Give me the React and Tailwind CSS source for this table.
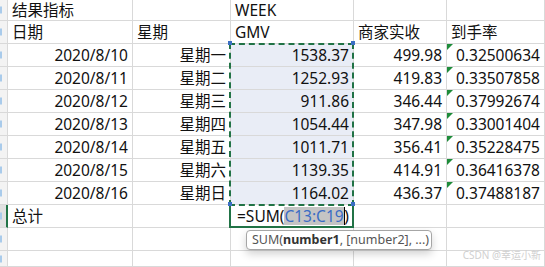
import React from 'react';

const rows = [
  ['2020/8/10', '星期一', '1538.37', '499.98', '0.32500634'],
  ['2020/8/11', '星期二', '1252.93', '419.83', '0.33507858'],
  ['2020/8/12', '星期三', '911.86', '346.44', '0.37992674'],
  ['2020/8/13', '星期四', '1054.44', '347.98', '0.33001404'],
  ['2020/8/14', '星期五', '1011.71', '356.41', '0.35228475'],
  ['2020/8/15', '星期六', '1139.35', '414.91', '0.36416378'],
  ['2020/8/16', '星期日', '1164.02', '436.37', '0.37488187'],
];

const cell = 'relative flex items-center border-r border-b border-[#d9d9d9] px-[4px] leading-[18px] whitespace-nowrap overflow-hidden';

const RowHead = ({ active }) => (
  <div className={`relative border-b border-[#d9d9d9] ${active ? 'bg-[#e1e1e1] border-r-2 border-r-[#217346]' : 'bg-[#f3f3f3] border-r border-r-[#d9d9d9]'}`}>
    <span className="absolute left-0 top-1/2 -translate-y-1/2 w-[2px] h-[7px] bg-[#a9cbeb]" />
  </div>
);

const Flag = () => (
  <span className="absolute left-0 top-0 w-0 h-0 border-t-[6px] border-t-[#1e8c3a] border-r-[6px] border-r-transparent" />
);

export default function App() {
  return (
    <div className="relative w-[545px] h-[267px] overflow-hidden bg-white text-[15.5px] text-[#111]" style={{ fontFamily: '"Noto Sans", "Noto Sans CJK SC", sans-serif' }}>
      <div className="grid grid-cols-[8px_125px_98px_123px_93px_98px] grid-rows-[21px_repeat(10,23px)_16px]">
        <RowHead />
        <div className={cell}>结果指标</div>
        <div className={cell}></div>
        <div className={cell}>WEEK</div>
        <div className={cell}></div>
        <div className={cell}></div>

        <RowHead />
        <div className={cell}>日期</div>
        <div className={cell}>星期</div>
        <div className={cell}>GMV</div>
        <div className={cell}>商家实收</div>
        <div className={cell}>到手率</div>

        {rows.map((r) => (
          <React.Fragment key={r[0]}>
            <RowHead />
            <div className={`${cell} justify-end`}>{r[0]}</div>
            <div className={`${cell} justify-end`}>{r[1]}</div>
            <div className={`${cell} justify-end bg-[#e9edf6]`}>{r[2]}</div>
            <div className={`${cell} justify-end`}>{r[3]}</div>
            <div className={`${cell} pl-[9px] pr-0`}>
              <Flag />
              {r[4]}
            </div>
          </React.Fragment>
        ))}

        <RowHead active />
        <div className={cell}>总计</div>
        <div className={cell}></div>
        <div className={`${cell} pl-[6px]`}>
          <span>=SUM(</span>
          <span className="bg-[#c4c4c4] text-[#3a6cc4]">C13:C19</span>
          <span className="inline-block w-[1px] h-[18px] bg-black" />
          <span>)</span>
        </div>
        <div className={cell}></div>
        <div className={cell}></div>

        {[0, 1].map((i) => (
          <React.Fragment key={i}>
            <RowHead />
            <div className={cell}></div>
            <div className={cell}></div>
            <div className={cell}></div>
            <div className={cell}></div>
            <div className={cell}></div>
          </React.Fragment>
        ))}
      </div>

      {/* copied range marquee */}
      <div className="absolute left-[229px] top-[43px] w-[125px] h-[163px] border-2 border-dashed border-[#217346] pointer-events-none" />
      {/* active cell */}
      <div className="absolute left-[229px] top-[205px] w-[125px] h-[23px] border-2 border-t-0 border-[#217346] pointer-events-none" />
      {/* range handles */}
      <span className="absolute left-[228px] top-[41px] w-[4px] h-[4px] bg-[#3b6fc4]" />
      <span className="absolute left-[351px] top-[41px] w-[4px] h-[4px] bg-[#3b6fc4]" />
      <span className="absolute left-[228px] top-[202px] w-[4px] h-[4px] bg-[#3b6fc4]" />
      <span className="absolute left-[351px] top-[202px] w-[4px] h-[4px] bg-[#3b6fc4]" />

      {/* function tooltip */}
      <div className="absolute left-[246px] top-[230px] w-[186px] h-[20px] flex items-center px-[5px] bg-white border border-[#a6a6a6] rounded-[4px] shadow-[0_4px_8px_rgba(0,0,0,0.18)] text-[12.5px] text-[#555] whitespace-nowrap">
        SUM(<b className="font-bold text-[#333]">number1</b>, [number2], ...)
      </div>

      <div className="absolute right-[4px] bottom-[7px] text-[10px] text-[#d0d0d0] leading-none">CSDN @幸运小新</div>
    </div>
  );
}
